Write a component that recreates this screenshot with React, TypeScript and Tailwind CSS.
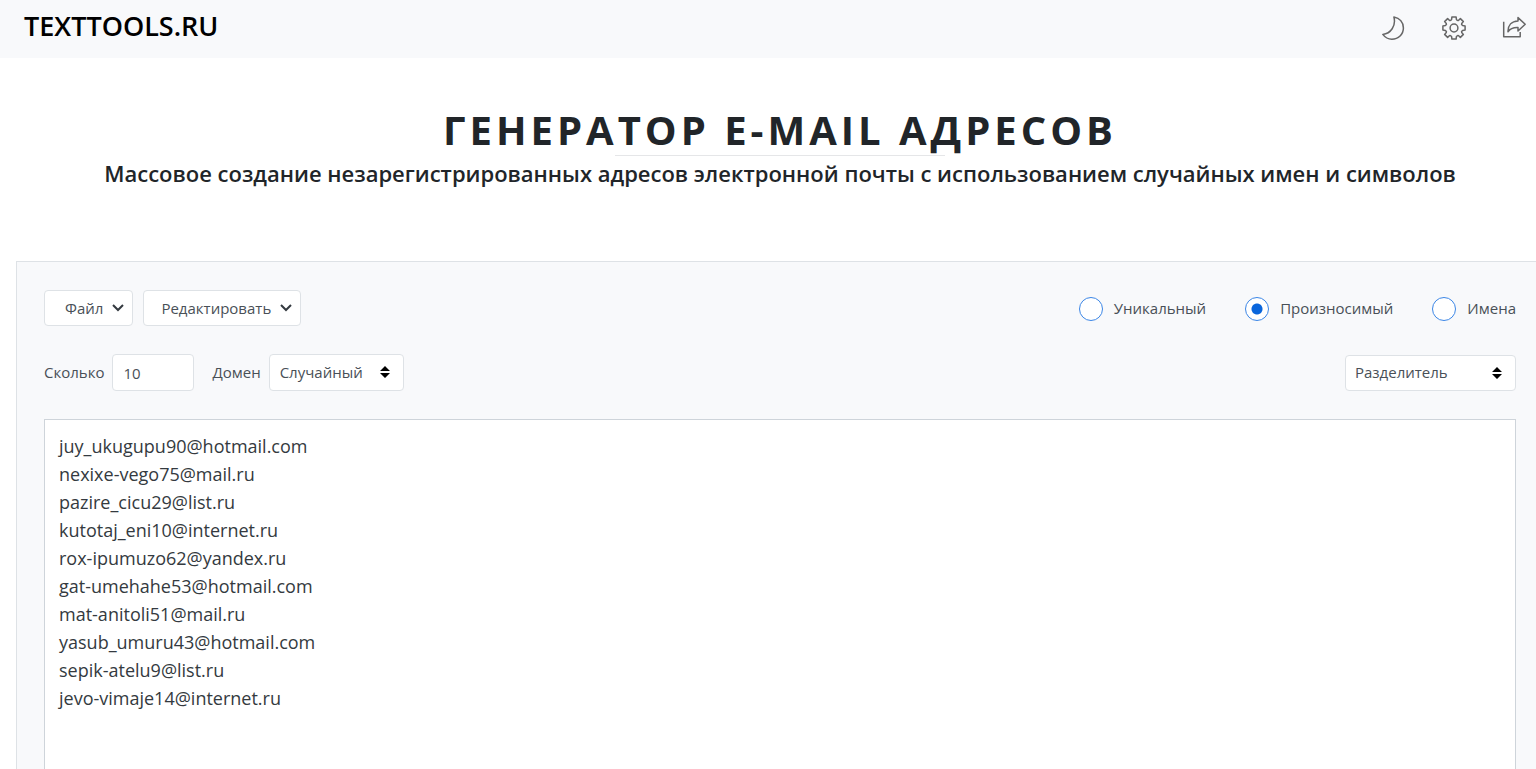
import { useState } from "react";
import type { ReactNode } from "react";

const INITIAL_EMAILS = [
  "juy_ukugupu90@hotmail.com",
  "nexixe-vego75@mail.ru",
  "pazire_cicu29@list.ru",
  "kutotaj_eni10@internet.ru",
  "rox-ipumuzo62@yandex.ru",
  "gat-umehahe53@hotmail.com",
  "mat-anitoli51@mail.ru",
  "yasub_umuru43@hotmail.com",
  "sepik-atelu9@list.ru",
  "jevo-vimaje14@internet.ru",
].join("\n");

const MODES = ["Уникальный", "Произносимый", "Имена"];

function Icon({ children }: { children: ReactNode }) {
  return (
    <svg
      viewBox="0 0 24 24"
      className="size-6"
      fill="none"
      stroke="currentColor"
      strokeWidth="1.5"
      strokeLinejoin="round"
      aria-hidden="true"
    >
      {children}
    </svg>
  );
}

function MoonIcon() {
  return (
    <Icon>
      <path d="M11.9 1C14.3 10 8.6 17.6 .8 18.4C3.2 21.6 6.2 23.2 9.8 23.2C16.4 23.2 21.4 18.4 21.4 12C21.4 6.4 17.7 2.2 11.9 1Z" />
    </Icon>
  );
}

function GearIcon() {
  return (
    <Icon>
      <path d="M9.9 .9H14.1L14.4 3.3Q15.5 5 16.6 4.3L18.4 2.6L21.4 5.6L19.7 7.4Q19 8.5 20.7 9.6L23.1 9.9V14.1L20.7 14.4Q19 15.5 19.7 16.6L21.4 18.4L18.4 21.4L16.6 19.7Q15.5 19 14.4 20.7L14.1 23.1H9.9L9.6 20.7Q8.5 19 7.4 19.7L5.6 21.4L2.6 18.4L4.3 16.6Q5 15.5 3.3 14.4L.9 14.1V9.9L3.3 9.6Q5 8.5 4.3 7.4L2.6 5.6L5.6 2.6L7.4 4.3Q8.5 5 9.6 3.3Z" />
      <circle cx="12" cy="12" r="3.9" />
    </Icon>
  );
}

function ShareIcon() {
  return (
    <Icon>
      <path d="M1.7 5.7V20.7H18.2V16" />
      <path d="M16 1.6L23.2 8.3L16 15V11.6C11.2 11.4 8 12.8 6 15.8C5.8 9.4 9.6 5.2 16 5Z" />
    </Icon>
  );
}

function MenuButton({ label, padding }: { label: string; padding: string }) {
  return (
    <button
      type="button"
      className={`flex h-9 items-center gap-[9px] rounded border border-[#dee2e6] bg-white ${padding}`}
    >
      {label}
      <svg viewBox="0 0 12 8" className="h-2 w-3" fill="none" stroke="#343a40" strokeWidth="2" aria-hidden="true">
        <path d="M1 1L6 6L11 1" />
      </svg>
    </button>
  );
}

function SortArrows() {
  return (
    <svg
      viewBox="0 0 10 12"
      className="pointer-events-none absolute top-3 right-[14px] h-3 w-[10px]"
      fill="#000"
      aria-hidden="true"
    >
      <path d="M5 0L10 5H0ZM0 7H10L5 12Z" />
    </svg>
  );
}

export default function App() {
  const [mode, setMode] = useState("Произносимый");
  const [emails, setEmails] = useState(INITIAL_EMAILS);

  return (
    <div className="min-h-screen overflow-hidden bg-white font-['Open_Sans','Noto_Sans',sans-serif] text-[15px] text-[#495057]">
      <header className="flex h-[58px] items-center justify-between bg-[#f8f9fb] pr-[10px] pb-[2px] pl-6">
        <a href="#" className="pb-1 text-[27px] leading-9 font-semibold text-black">
          TEXTTOOLS.RU
        </a>
        <nav className="flex items-center gap-9 text-[#666]" aria-label="Инструменты">
          <button type="button" aria-label="Тёмная тема">
            <MoonIcon />
          </button>
          <button type="button" aria-label="Настройки">
            <GearIcon />
          </button>
          <button type="button" aria-label="Поделиться">
            <ShareIcon />
          </button>
        </nav>
      </header>

      <main className="-mr-2 ml-4">
        <div className="flex flex-col items-center pt-12 text-center text-[#212529]">
          <h1 className="text-[40px] leading-[48px] font-bold tracking-[4px]">ГЕНЕРАТОР E-MAIL АДРЕСОВ</h1>
          <hr className="mt-px w-[330px] border-[#e5e6e8]" />
          <h2 className="text-[22px] leading-[34px] font-semibold">
            Массовое создание незарегистрированных адресов электронной почты с использованием случайных имен и символов
          </h2>
        </div>

        <section className="mt-[71px] border border-[#dee2e6] bg-[#f8f9fb] px-[27px] pt-7">
          <div className="flex items-center justify-between">
            <div className="flex gap-[10px]">
              <MenuButton label="Файл" padding="pl-5 pr-2" />
              <MenuButton label="Редактировать" padding="pl-[17px] pr-2" />
            </div>
            <fieldset className="flex gap-[39px] pt-px">
              {MODES.map((name) => (
                <label key={name} className="flex items-center gap-[11px]">
                  <input
                    type="radio"
                    name="mode"
                    checked={mode === name}
                    onChange={() => setMode(name)}
                    className="size-6 appearance-none rounded-full border border-[#3b86e6] bg-white checked:bg-[radial-gradient(circle,#0a66dc_5px,#fff_6px)]"
                  />
                  {name}
                </label>
              ))}
            </fieldset>
          </div>

          <div className="mt-7 flex items-center justify-between">
            <div className="flex items-center">
              <label htmlFor="count">Сколько</label>
              <input
                id="count"
                type="text"
                inputMode="numeric"
                defaultValue="10"
                className="ml-2 h-[37px] w-[82px] rounded border border-[#dee2e6] bg-white px-[10px]"
              />
              <label htmlFor="domain" className="ml-[18px]">
                Домен
              </label>
              <div className="relative ml-2">
                <select
                  id="domain"
                  className="h-[37px] w-[135px] appearance-none rounded border border-[#dee2e6] bg-white px-[10px]"
                >
                  <option>Случайный</option>
                </select>
                <SortArrows />
              </div>
            </div>
            <div className="relative">
              <select
                aria-label="Разделитель"
                className="h-9 w-[171px] appearance-none rounded border border-[#dee2e6] bg-white px-[9px]"
              >
                <option>Разделитель</option>
              </select>
              <SortArrows />
            </div>
          </div>

          <textarea
            aria-label="Адреса"
            spellCheck={false}
            value={emails}
            onChange={(event) => setEmails(event.target.value)}
            className="mt-7 block h-[420px] w-full resize-none border border-[#ced4da] bg-white px-[14px] py-3 text-lg leading-[28px] text-[#343a40]"
          />
        </section>
      </main>
    </div>
  );
}
